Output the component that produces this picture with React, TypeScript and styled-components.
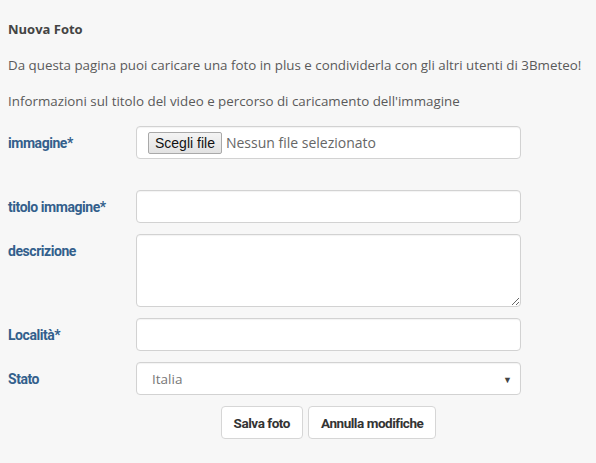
import React from "react"
import styled, { createGlobalStyle } from "styled-components"

const GlobalStyle = createGlobalStyle`
  html, body {
    margin: 0;
    padding: 0;
    background: #f7f7f7;
  }
  * {
    box-sizing: border-box;
  }
`

const Page = styled.div`
  padding: 19px 8px 0 8px;
  font-family: "Open Sans", "Liberation Sans", sans-serif;
  color: #555;
`

const Title = styled.h3`
  margin: 0 0 16px 0;
  font-size: 13px;
  line-height: 20px;
  font-weight: 700;
  color: #444;
`

const Intro = styled.p`
  margin: 0 0 16px 0;
  font-size: 13.35px;
  line-height: 20px;
  color: #5a5a5a;
  white-space: nowrap;
  &:last-of-type {
    margin-bottom: 15px;
  }
`

const Form = styled.form`
  display: grid;
  grid-template-columns: 128px 385px;
  row-gap: 11px;
`

const Label = styled.label<{ $spaced?: boolean }>`
  font-family: Roboto, "Liberation Sans", sans-serif;
  font-weight: 700;
  font-size: 14px;
  letter-spacing: -0.45px;
  color: #335f8c;
  line-height: 35px;
  height: ${(p) => (p.$spaced ? "53px" : "33px")};
`

const fieldBase = `
  width: 100%;
  background: #fff;
  border: 1px solid #d2d2d2;
  border-radius: 4px;
  box-shadow: inset 0 1px 1px rgba(0, 0, 0, 0.05);
  font-family: "Open Sans", "Liberation Sans", sans-serif;
  font-size: 13px;
  color: #666;
  outline: none;
`

const FileBox = styled.div`
  ${fieldBase}
  height: 33px;
  display: flex;
  align-items: center;
  padding: 0 11px;
  gap: 4px;
`

const FileButton = styled.button`
  height: 22px;
  padding: 0 6px;
  font-family: "Liberation Sans", Arial, sans-serif;
  font-size: 14px;
  color: #111;
  background: linear-gradient(#f4f4f4, #e2e2e2);
  border: 1px solid #a9a9a9;
  border-radius: 2px;
`

const FileName = styled.span`
  font-size: 14px;
  color: #666;
`

const TextInput = styled.input`
  ${fieldBase}
  height: 33px;
  padding: 0 15px;
`

const TextArea = styled.textarea`
  ${fieldBase}
  height: 73px;
  padding: 6px 15px;
  display: block;
`

const SelectWrap = styled.div`
  position: relative;
`

const Select = styled.select`
  ${fieldBase}
  height: 33px;
  padding: 0 15px;
  appearance: none;
  font-size: 13.5px;
  color: #777;
`

const Arrow = styled.span`
  position: absolute;
  right: 9px;
  top: 50%;
  transform: translateY(-50%);
  font-size: 9px;
  color: #444;
  pointer-events: none;
`

const Actions = styled.div`
  grid-column: 2;
  display: flex;
  justify-content: center;
  gap: 5px;
`

const Button = styled.button`
  height: 33px;
  padding: 0 12px;
  background: #fff;
  border: 1px solid #d6d6d6;
  border-radius: 4px;
  font-family: Roboto, "Liberation Sans", sans-serif;
  font-weight: 700;
  font-size: 13.5px;
  letter-spacing: -0.45px;
  color: #333;
`

export default function App() {
  return (
    <>
      <GlobalStyle />
      <Page>
        <Title>Nuova Foto</Title>
        <Intro>
          Da questa pagina puoi caricare una foto in plus e condividerla con gli altri utenti di 3Bmeteo!
        </Intro>
        <Intro>Informazioni sul titolo del video e percorso di caricamento dell'immagine</Intro>
        <Form onSubmit={(e) => e.preventDefault()}>
          <Label $spaced>immagine*</Label>
          <FileBox>
            <FileButton type="button">Scegli file</FileButton>
            <FileName>Nessun file selezionato</FileName>
          </FileBox>

          <Label>titolo immagine*</Label>
          <TextInput type="text" />

          <Label>descrizione</Label>
          <TextArea />

          <Label>Località*</Label>
          <TextInput type="text" />

          <Label>Stato</Label>
          <SelectWrap>
            <Select defaultValue="Italia">
              <option>Italia</option>
            </Select>
            <Arrow>▼</Arrow>
          </SelectWrap>

          <Actions>
            <Button type="submit">Salva foto</Button>
            <Button type="button">Annulla modifiche</Button>
          </Actions>
        </Form>
      </Page>
    </>
  )
}
